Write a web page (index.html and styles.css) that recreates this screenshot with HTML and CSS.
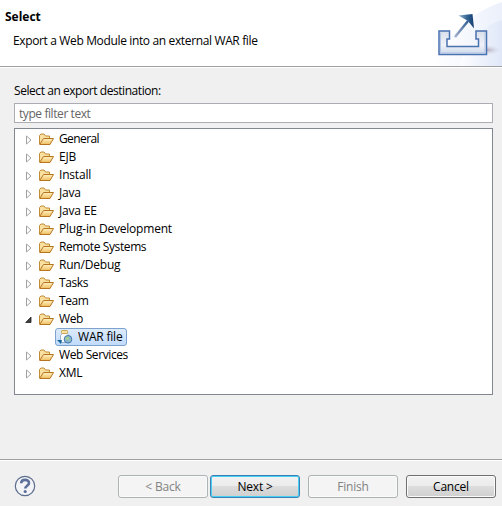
FILE: index.html
```
<!DOCTYPE html>
<html lang="en">
<head>
<meta charset="utf-8">
<title>Export</title>
<link rel="stylesheet" href="styles.css">
</head>
<body>
<svg class="defs" aria-hidden="true">
  <defs>
    <linearGradient id="fold" x1="0" y1="0" x2="0" y2="1"><stop offset="0" stop-color="#fff3c4"/><stop offset="1" stop-color="#f0bd60"/></linearGradient>
    <symbol id="folder" viewBox="0 0 16 16">
      <path d="M1.500 13V4.500l1.500-1.500h3l1.500 2h4V8" fill="#f9dfa0" stroke="#c08c36"/>
      <path d="M1.700 13.500L5.500 7.500h10L12 13.500z" fill="url(#fold)" stroke="#b67420" stroke-linejoin="round"/>
    </symbol>
    <symbol id="closed" viewBox="0 0 7 10"><path d="M1.500 1v8l4.500-4z" fill="#fff" stroke="#a3a3a3"/></symbol>
    <symbol id="opened" viewBox="0 0 7 10"><path d="M6 2v5.500H.7z" fill="#404040" stroke="#222" stroke-width=".8"/></symbol>
  </defs>
</svg>
<main class="dialog">
  <header class="banner">
    <div class="heading">
      <h1>Select</h1>
      <p>Export a Web Module into an external WAR file</p>
    </div>
    <svg class="art" width="80" height="66" viewBox="0 0 80 66">
      <defs>
        <linearGradient id="sky" x1="0" y1="0" x2="1" y2="0"><stop offset="0" stop-color="#fff"/><stop offset="1" stop-color="#dbe4f7"/></linearGradient>
        <linearGradient id="tray" x1="0" y1="0" x2="0" y2="1"><stop offset="0" stop-color="#d9e0ea"/><stop offset=".6" stop-color="#f0f2f8"/><stop offset="1" stop-color="#cbd7ea"/></linearGradient>
        <linearGradient id="tip" x1="0" y1="0" x2="1" y2="0"><stop offset="0" stop-color="#91b2cf"/><stop offset=".6" stop-color="#2d6090"/><stop offset="1" stop-color="#173c70"/></linearGradient>
        <linearGradient id="stem" x1="1" y1="0" x2="0" y2="1"><stop offset="0" stop-color="#315f98"/><stop offset="1" stop-color="#a3b1cc"/></linearGradient>
        <radialGradient id="shade"><stop offset="0" stop-color="#b5a9b8"/><stop offset="1" stop-color="#d8dced" stop-opacity="0"/></radialGradient>
      </defs>
      <path d="M10 66C25 36 49 12 80 2v64z" fill="url(#sky)" opacity=".55"/>
      <path d="M37 66C43 44 58 27 80 20v46z" fill="url(#sky)" opacity=".7"/>
      <ellipse cx="65" cy="50" rx="14" ry="5" fill="url(#shade)"/>
      <path d="M17 31h10.500v8H25v7.500h31.500V39H54v-8h10.500v23.500H17z" fill="url(#tray)" stroke="#4972b0" stroke-width="1.500"/>
      <path d="M18.500 32.500v20.500h44.500V32.500" fill="none" stroke="#b1c5e4"/>
      <path d="M33 37L46 21" stroke="url(#stem)" stroke-width="2.500"/>
      <path d="M36.500 15.500L50.500 14 52 28.500 46 21z" fill="url(#tip)"/>
    </svg>
  </header>
  <section class="content">
    <label for="filter">Select an export destination:</label>
    <input id="filter" type="text" value="type filter text">
    <ul class="tree">
      <li><svg class="arrow"><use href="#closed"/></svg><svg class="icon"><use href="#folder"/></svg><span class="tight">General</span></li>
      <li><svg class="arrow"><use href="#closed"/></svg><svg class="icon"><use href="#folder"/></svg><span>EJB</span></li>
      <li><svg class="arrow"><use href="#closed"/></svg><svg class="icon"><use href="#folder"/></svg><span>Install</span></li>
      <li><svg class="arrow"><use href="#closed"/></svg><svg class="icon"><use href="#folder"/></svg><span>Java</span></li>
      <li><svg class="arrow"><use href="#closed"/></svg><svg class="icon"><use href="#folder"/></svg><span>Java EE</span></li>
      <li><svg class="arrow"><use href="#closed"/></svg><svg class="icon"><use href="#folder"/></svg><span>Plug-in Development</span></li>
      <li><svg class="arrow"><use href="#closed"/></svg><svg class="icon"><use href="#folder"/></svg><span class="snug">Remote Systems</span></li>
      <li><svg class="arrow"><use href="#closed"/></svg><svg class="icon"><use href="#folder"/></svg><span>Run/Debug</span></li>
      <li><svg class="arrow"><use href="#closed"/></svg><svg class="icon"><use href="#folder"/></svg><span class="snug">Tasks</span></li>
      <li><svg class="arrow"><use href="#closed"/></svg><svg class="icon"><use href="#folder"/></svg><span class="snug">Team</span></li>
      <li><svg class="arrow"><use href="#opened"/></svg><svg class="icon"><use href="#folder"/></svg><span class="snug">Web</span></li>
      <li class="child"><div class="selected">
        <svg class="war" viewBox="0 0 16 16">
          <path d="M5.500 4.500h5l1.500 2v7H3.500v-7z" fill="#f8fafd" stroke="#9db5d0"/>
          <rect x="4.500" y="1.500" width="6" height="3" rx=".8" fill="#f7e3a7" stroke="#c9a450"/>
          <circle cx="11" cy="10.300" r="3.800" fill="#86b3da" stroke="#4579a8"/>
          <path d="M8.500 8.500l3-1 1 1.500-2 2.500-2-1zM12 11l2-1-1 3z" fill="#a3cf8b"/>
          <path d="M0 11h5l-1 4z" fill="#17669c"/>
        </svg><span>WAR file</span></div></li>
      <li><svg class="arrow"><use href="#closed"/></svg><svg class="icon"><use href="#folder"/></svg><span class="snug">Web Services</span></li>
      <li><svg class="arrow"><use href="#closed"/></svg><svg class="icon"><use href="#folder"/></svg><span>XML</span></li>
    </ul>
  </section>
  <footer class="footer">
    <svg class="help" width="22" height="22" viewBox="0 0 22 22"><circle cx="11" cy="11" r="9.700" fill="#f3f4f7" stroke="#5c6d8e" stroke-width="1.200"/><path d="M7.200 8.300C7.200 3.700 15 3.900 15 8c0 2.700-3.800 2.800-3.800 5.600" fill="none" stroke="#5c709a" stroke-width="2.600"/><circle cx="11.200" cy="16.500" r="1.600" fill="#5c709a"/></svg>
    <div class="actions">
      <div class="steps"><button disabled>&lt; Back</button><button class="primary">Next &gt;</button></div>
      <button disabled>Finish</button>
      <button>Cancel</button>
    </div>
  </footer>
</main>
</body>
</html>
```
FILE: styles.css
```
* { box-sizing: border-box; }
body { margin: 0; background: #f0f0f0; color: #000; font: 12px/18px "Open Sans", "Noto Sans", sans-serif; letter-spacing: -0.2px; }
.defs { position: absolute; width: 0; height: 0; }
.dialog { display: flex; flex-direction: column; width: 502px; height: 506px; overflow: hidden; }
.banner { display: flex; justify-content: space-between; height: 68px; background: #fff; border-bottom: 1px solid #fff; box-shadow: inset 0 -1px #a0a0a0; }
.art { flex: none; display: block; }
.heading { padding: 8px 0 0 5px; white-space: nowrap; }
h1 { margin: 0; font-size: 12px; line-height: 18px; letter-spacing: 0; }
p { margin: 6px 0 0 8px; letter-spacing: -0.36px; }
.content { display: flex; flex-direction: column; flex: 1; padding: 14px 9px 0 14px; }
label { height: 21px; letter-spacing: -0.44px; }
input { width: 100%; height: 20px; margin: 0 0 5px; padding: 0 4px; border: 1px solid #abadb3; background: #fff; color: #666; font: inherit; letter-spacing: -0.42px; }
.tree { height: 267px; margin: 0; padding: 1px 0 0 10px; list-style: none; background: #fff; border: 1px solid #828790; }
li { display: flex; align-items: center; height: 18px; white-space: nowrap; }
.arrow { width: 7px; height: 10px; margin: 2px 6px 0 0; }
.icon { width: 16px; height: 16px; margin-right: 5px; }
.snug { letter-spacing: -0.4px; }
.tight { letter-spacing: -0.6px; }
.child { padding-left: 30px; }
.selected { display: flex; align-items: center; height: 18px; width: 72px; padding-left: 1px; border: 1px solid #7da2ce; border-radius: 3px; background: linear-gradient(#dcebfc, #c1dbfc); }
.war { width: 16px; height: 16px; margin-right: 5px; }
.footer { display: flex; justify-content: space-between; height: 47px; padding: 15px 6px 0 14px; border-top: 1px solid #a0a0a0; box-shadow: inset 0 1px #fff; }
.actions { display: flex; gap: 8px; }
.steps { display: flex; gap: 2px; }
button { width: 90px; height: 23px; padding: 0; border: 1px solid #707070; border-radius: 3px; background: linear-gradient(#f2f2f2 0%, #ebebeb 49%, #ddd 50%, #cfcfcf 100%); box-shadow: inset 0 0 0 1px #fafafa; color: #000; font: inherit; letter-spacing: inherit; }
button:disabled { border-color: #adb2b5; background: #f4f4f4; color: #838383; }
.primary { border-color: #3c7fb1; box-shadow: inset 0 0 0 1px #46d0f5; }
```
